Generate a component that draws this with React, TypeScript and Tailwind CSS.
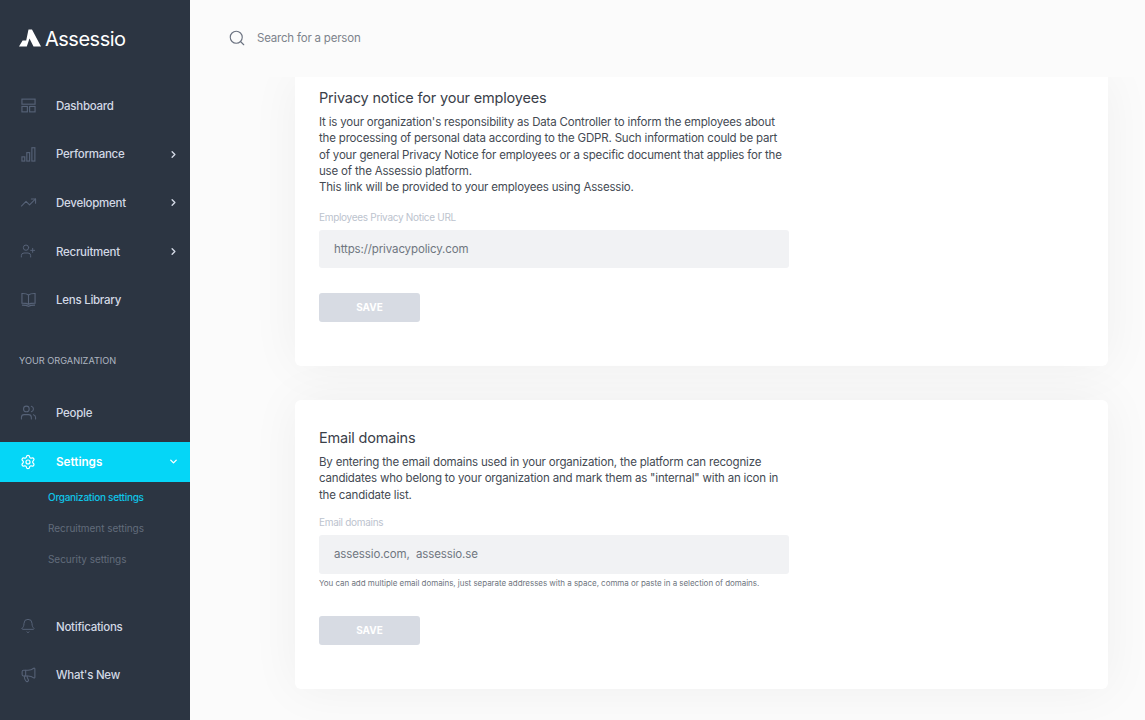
import { Search, ChevronRight, ChevronDown, TrendingUp, UserPlus, Users, Settings, Bell, Megaphone } from 'lucide-react';

const font = 'font-["Inter",sans-serif]';

const DashboardIcon = ({ className }: { className?: string }) => (
  <svg viewBox="0 0 16 16" fill="none" stroke="currentColor" strokeWidth="1.2" className={className}>
    <rect x="1" y="1.2" width="14" height="5.4" />
    <rect x="1" y="9" width="5.8" height="5.8" />
    <rect x="9.2" y="9" width="5.8" height="5.8" />
  </svg>
);

const BarsIcon = ({ className }: { className?: string }) => (
  <svg viewBox="0 0 16 16" fill="none" stroke="currentColor" strokeWidth="1.2" className={className}>
    <rect x="1" y="10.5" width="3" height="4.5" />
    <rect x="6.2" y="6" width="3" height="9" />
    <rect x="11.6" y="0.8" width="3.2" height="14.2" />
  </svg>
);

const BookIcon = ({ className }: { className?: string }) => (
  <svg viewBox="0 0 16 16" fill="none" stroke="currentColor" strokeWidth="1.2" className={className}>
    <path d="M8 3.2C6.6 2 4 1.5 1 1.6v10.2c3 0 5.6.3 7 1.4 1.4-1.1 4-1.4 7-1.4V1.6C12 1.5 9.4 2 8 3.2zM8 3.2v10" />
    <path d="M1 14c3 0 5.4.2 7 1.2 1.6-1 4-1.2 7-1.2" />
  </svg>
);

const NavItem = ({ icon: Icon, label, arrow, size = 'h-[17px] w-[17px]' }: { icon: React.ElementType; label: string; arrow?: boolean; size?: string }) => (
  <div className="flex h-[48.6px] items-center pl-[19px] pr-[11px]">
    <div className="flex w-[18px] shrink-0 justify-center">
      <Icon className={`${size} text-[#566277]`} strokeWidth={1.5} />
    </div>
    <span className="ml-[19px] flex-1 pt-[2px] text-[11.5px] font-medium tracking-[-0.26px] text-[#d3d9e5]">{label}</span>
    {arrow && <ChevronRight className="h-[11px] w-[11px] text-[#d3d9e5]" strokeWidth={3} />}
  </div>
);

const SubItem = ({ label, active }: { label: string; active?: boolean }) => (
  <div className={`flex h-[31px] items-center pl-[48px] text-[10px] ${active ? 'font-medium tracking-[-0.28px] text-[#0fc4e8]' : 'tracking-[-0.05px] text-[#626c7b]'}`}>
    {label}
  </div>
);

const Field = ({ label, value }: { label: string; value: string }) => (
  <>
    <div className="text-[10px] leading-[13px] tracking-[-0.3px] text-[#bcc3ce]">{label}</div>
    <div className="mt-[6px] flex h-[38.5px] w-[470px] items-center rounded-[3px] bg-[#f1f2f4] px-[15px] text-[11.5px] tracking-[-0.12px] whitespace-pre text-[#6f7680]">
      {value}
    </div>
  </>
);

const SaveButton = () => (
  <div className="flex h-[29px] w-[101px] items-center justify-center rounded-[3px] bg-[#d7dbe3] text-[10px] font-bold text-white">
    SAVE
  </div>
);

export default function App() {
  return (
    <div className={`flex h-[720px] w-[1145px] overflow-hidden bg-[#fbfbfb] ${font}`}>
      <aside className="flex w-[190px] shrink-0 flex-col bg-[#2c3542]">
        <div className="flex h-[81.2px] items-start pl-[19px] pt-[28px]">
          <svg width="22" height="18" viewBox="0 0 22 18" className="mt-[1px] shrink-0">
            <path d="M9.5 0.5H13L22 17.5H14.5L10.5 9.5L7.8 17.5H0L3.6 11.4H7.2z" fill="#fff" />
          </svg>
          <span className="ml-[4px] text-[20px] leading-[22px] tracking-[-0.5px] text-white">Assessio</span>
        </div>
        <NavItem icon={DashboardIcon} label="Dashboard" size="h-[15px] w-[15px]" />
        <NavItem icon={BarsIcon} label="Performance" arrow size="h-[15px] w-[15px]" />
        <NavItem icon={TrendingUp} label="Development" arrow />
        <NavItem icon={UserPlus} label="Recruitment" arrow size="h-[16px] w-[16px]" />
        <NavItem icon={BookIcon} label="Lens Library" size="h-[15px] w-[15px]" />
        <div className="h-[64.4px] pl-[19px] pt-[31px] text-[9.2px] leading-[12px] text-[#aeb5c1]">YOUR ORGANIZATION</div>
        <NavItem icon={Users} label="People" />
        <div className="mt-[4.7px] flex h-[40px] items-center bg-[#05d6f7] pl-[19px] pr-[11px]">
          <div className="flex w-[18px] shrink-0 justify-center">
            <Settings className="h-[16px] w-[16px] text-white" strokeWidth={1.8} />
          </div>
          <span className="ml-[19px] flex-1 pt-[2px] text-[11.7px] font-semibold text-white">Settings</span>
          <ChevronDown className="h-[11px] w-[11px] text-white" strokeWidth={3} />
        </div>
        <SubItem label="Organization settings" active />
        <SubItem label="Recruitment settings" />
        <SubItem label="Security settings" />
        <div className="h-[27.2px]" />
        <NavItem icon={Bell} label="Notifications" size="h-[16px] w-[16px]" />
        <NavItem icon={Megaphone} label="What's New" size="h-[17px] w-[17px]" />
      </aside>
      <div className="flex min-w-0 flex-1 flex-col">
        <header className="relative z-10 flex h-[77px] shrink-0 items-center bg-[#fbfbfb] pl-[38px]">
          <Search className="mb-[1px] h-[18px] w-[18px] text-[#6b7280]" strokeWidth={1.5} />
          <span className="ml-[11px] pt-[1px] text-[11.5px] tracking-[-0.2px] text-[#7d838c]">Search for a person</span>
        </header>
        <main className="flex flex-col gap-[34px] pl-[105px] pr-[37px]">
          <section className="h-[289px] rounded-b-[6px] bg-white pl-[24px] pt-[12px] shadow-[0_0_50px_rgba(0,0,0,0.05)]">
            <h2 className="text-[14.5px] leading-[18px] tracking-[-0.18px] text-[#3a4049]">Privacy notice for your employees</h2>
            <p className="mt-[7px] w-[470px] text-[11.5px] leading-[16.3px] tracking-[-0.18px] text-[#444a53]">
              It is your organization's responsibility as Data Controller to inform the employees about the processing of personal data according to the GDPR. Such information could be part of your general Privacy Notice for employees or a specific document that applies for the use of the Assessio platform.
              <br />
              This link will be provided to your employees using Assessio.
            </p>
            <div className="mt-[15.5px]">
              <Field label="Employees Privacy Notice URL" value="https://privacypolicy.com" />
            </div>
            <div className="mt-[24.5px]">
              <SaveButton />
            </div>
          </section>
          <section className="h-[289px] rounded-[6px] bg-white pl-[24px] pt-[29px] shadow-[0_0_50px_rgba(0,0,0,0.05)]">
            <h2 className="text-[14.5px] leading-[18px] tracking-[-0.18px] text-[#3a4049]">Email domains</h2>
            <p className="mt-[7px] w-[470px] text-[11.5px] leading-[16.3px] tracking-[-0.18px] text-[#444a53]">
              By entering the email domains used in your organization, the platform can recognize candidates who belong to your organization and mark them as "internal" with an icon in the candidate list.
            </p>
            <div className="mt-[13.5px]">
              <Field label="Email domains" value="assessio.com,  assessio.se" />
            </div>
            <div className="mt-[4px] text-[8px] leading-[11px] tracking-[-0.04px] text-[#6f7680]">
              You can add multiple email domains, just separate addresses with a space, comma or paste in a selection of domains.
            </div>
            <div className="mt-[27px]">
              <SaveButton />
            </div>
          </section>
        </main>
      </div>
    </div>
  );
}
